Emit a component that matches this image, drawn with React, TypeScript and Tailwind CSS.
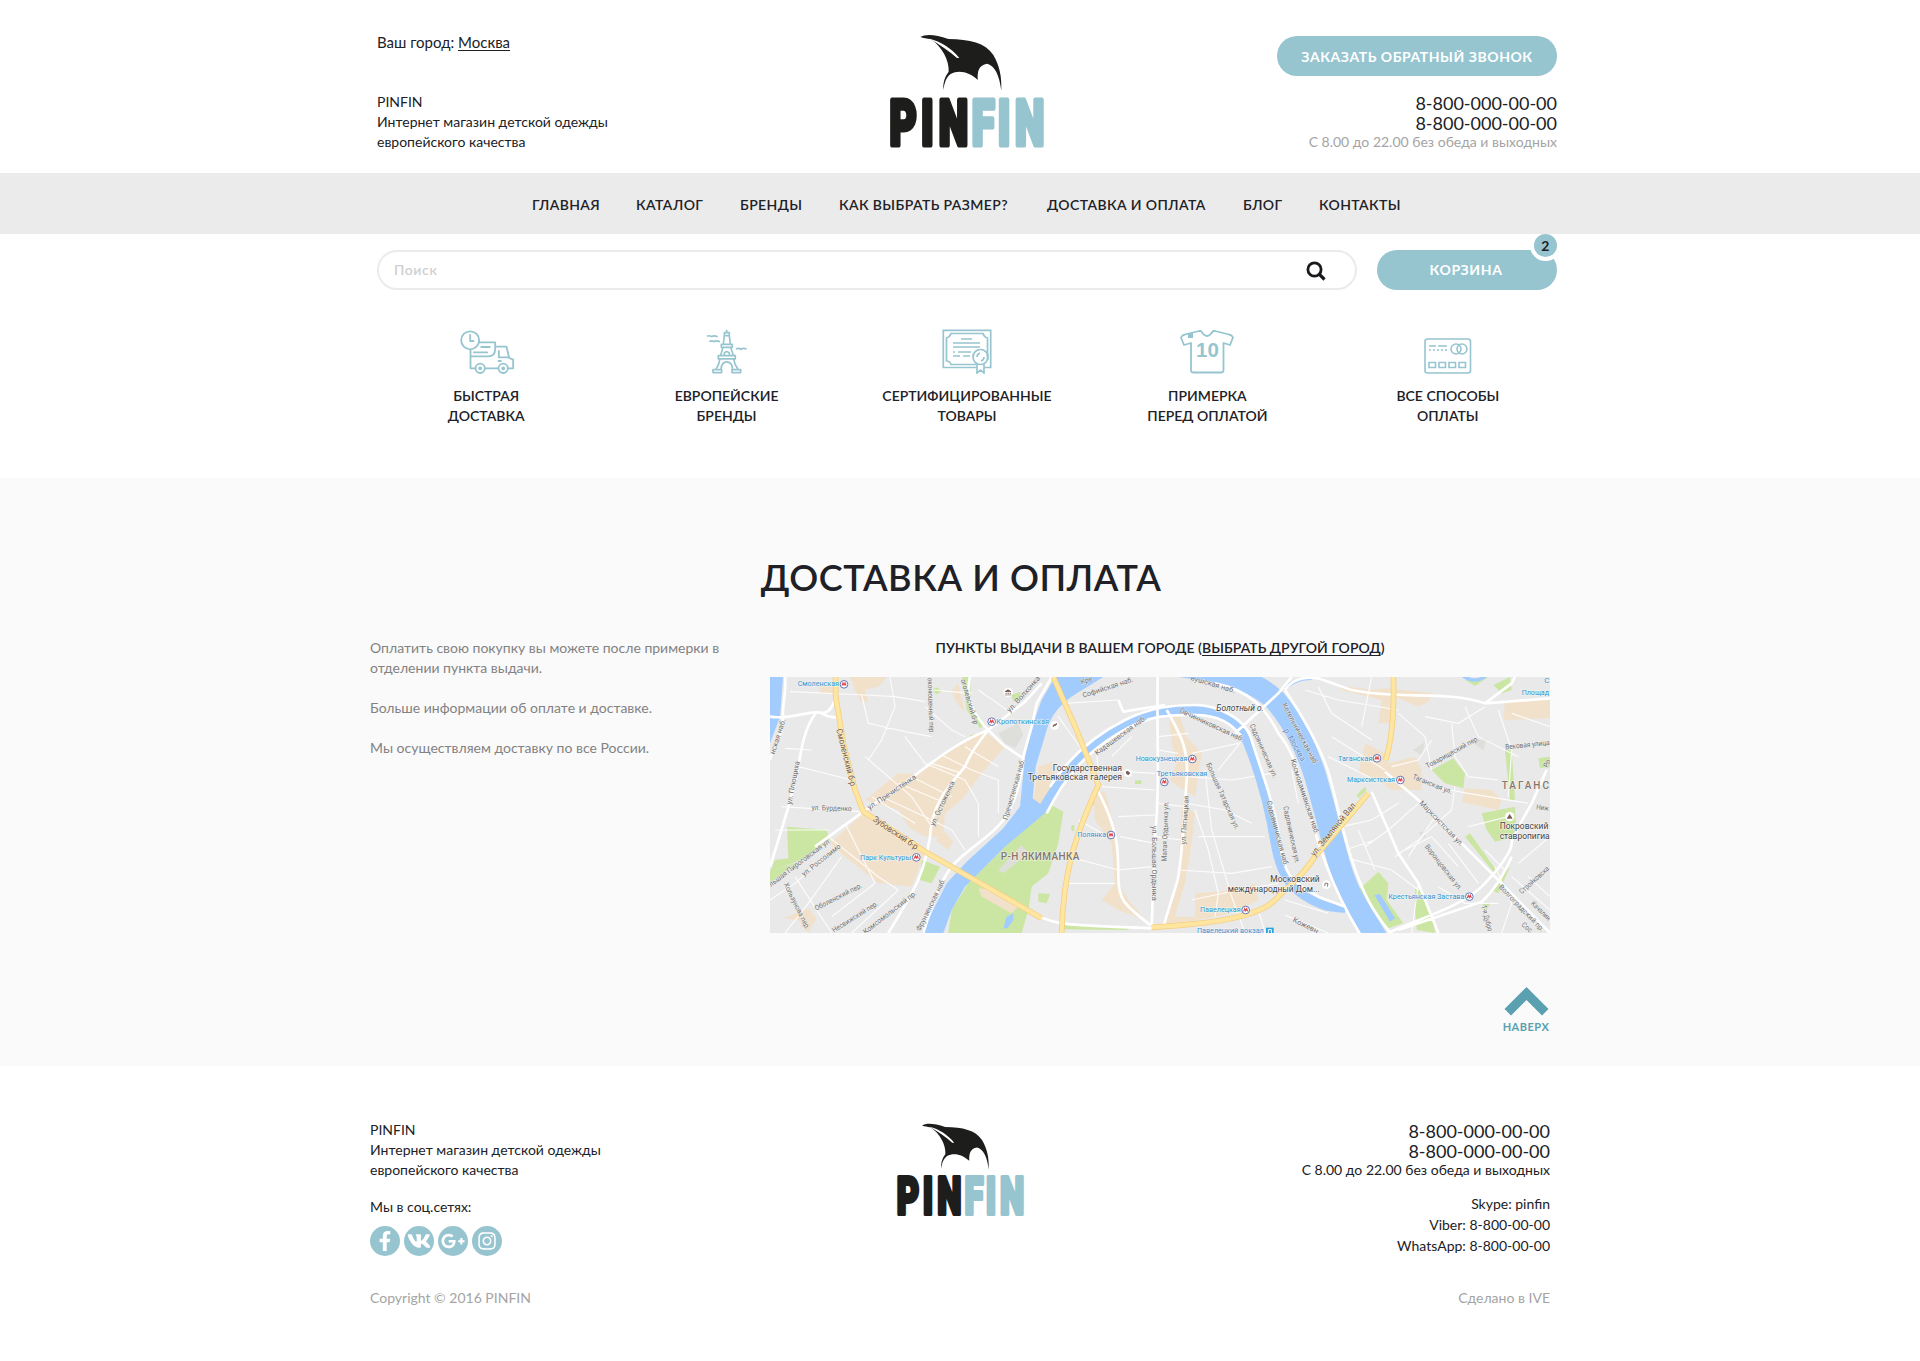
import type { ReactNode } from 'react';
import { FaFacebookF, FaGooglePlusG, FaInstagram, FaVk } from 'react-icons/fa';

const NAV = [
  { label: 'ГЛАВНАЯ', cls: 'w-[104px]' },
  { label: 'КАТАЛОГ', cls: 'w-[104px]' },
  { label: 'БРЕНДЫ', cls: 'w-[99px]' },
  { label: 'КАК ВЫБРАТЬ РАЗМЕР?', cls: 'w-[208px]' },
  { label: 'ДОСТАВКА И ОПЛАТА', cls: 'w-[196px]' },
  { label: 'БЛОГ', cls: 'w-[76px]' },
  { label: 'КОНТАКТЫ', cls: 'w-[90px]' },
];

function Logo({ className }: { className: string }) {
  return (
    <svg viewBox="60 42 462 339" className={className} aria-label="PINFIN" overflow="visible">
      <path
        fill="#1d1d1b"
        d="M151 51C165 42 195 42 235 57C300 58 345 68 370 105C390 140 395 170 394 212C388 165 375 138 352 131C325 135 322 155 323 180C300 158 268 148 242 162C228 172 223 190 220 210C219 190 223 172 236 155C238 120 215 80 183 58C170 55 160 55 151 51Z"
      />
      <path fill="#fff" d="M178 56C212 64 245 85 268 114L261 114C240 95 212 75 178 56Z" />
      <g transform="translate(0 374) scale(0.66 1)">
        <text fontFamily="Roboto" fontWeight="900" fontSize="190" strokeWidth="15" strokeLinejoin="round">
          <tspan x="89 232 313" fill="#1d1d1b" stroke="#1d1d1b">PIN</tspan>
          <tspan x="463 581 659" fill="#96c5d0" stroke="#96c5d0">FIN</tspan>
        </text>
      </g>
    </svg>
  );
}

function TruckIcon() {
  return (
    <svg viewBox="121 61 164 132" className="ml-[2px] h-[44px] w-[55px]" fill="none" stroke="#96c5d0" strokeWidth="5.500" strokeLinejoin="round" strokeLinecap="round">
      <circle cx="151" cy="92" r="27" />
      <path d="M151 76V94H161M179 98H226V118Q226 140 205 140H152M184 112H210M162 128H202M152 122V176H166M196 176H234M265 176H280V150L268 145L260 111H230M237 124V143H266M236 154H243" />
      <circle cx="181" cy="176" r="14" />
      <circle cx="250" cy="176" r="14" />
      <circle cx="181" cy="176" r="3" />
      <circle cx="250" cy="176" r="3" />
    </svg>
  );
}

function TowerIcon() {
  return (
    <svg viewBox="859 59 124 134" className="ml-px h-[44.6px] w-[41.3px]" fill="none" stroke="#96c5d0" strokeWidth="5" strokeLinejoin="round">
      <path d="M921 61V70M914 70H929V79H914ZM914 79L911 104M929 79L932 104M905 105H938V114H905ZM910 114L903 138M933 114L941 138M896 139H947V149H896ZM914 138V131Q921 123 929 131V138M901 149Q898 168 889 180M942 149Q945 168 955 180M880 181H906V190H880ZM937 181H963V190H937ZM904 180Q906 158 921 158Q937 158 939 180M862 81Q869 77 875 82Q883 77 894 82M869 97Q876 92 883 97Q890 92 901 97M949 119Q957 115 964 120Q970 115 981 119" />
    </svg>
  );
}

function CertificateIcon() {
  return (
    <svg viewBox="0 0 50 45" className="h-[45px] w-[50px]" fill="none" stroke="#96c5d0" strokeWidth="1.7">
      <path d="M35 38.5H1.3V1.3H48.7V38.5H42M34 35.5H9Q8 32 4.500 32V9Q8 8 9 4.500H41Q42 8 45.500 9V31M19 10H30M11 14H38M11 18H38M11 23H13M16 23H29M11 27H18M21 27H28M35 34V44L38.500 41L42 44V34" />
      <circle cx="38.500" cy="28" r="7.500" />
      <path d="M35 28Q35 25 38 24M42 28Q42 31 39 32" />
    </svg>
  );
}

function ShirtIcon() {
  return (
    <svg viewBox="0 0 54 45" className="h-[45px] w-[54px]" fill="none" stroke="#96c5d0" strokeWidth="1.8" strokeLinejoin="round">
      <path d="M19 2L5 5.500Q2 6 1 8.500L4 16L11 14V41Q11 43.500 13.500 43.500H41Q43.500 43.500 43.500 41V14L50 16L53 8.500Q52 6 49 5.500L35 2H33Q27 12 21 2Z" />
      <path d="M8 4.500L13 3.500V9H8Z" fill="#96c5d0" stroke="none" />
      <text x="27.500" y="28.300" textAnchor="middle" fontFamily="Liberation Sans" fontWeight="700" fontSize="20.500" fill="#96c5d0" stroke="none">10</text>
    </svg>
  );
}

function CardIcon() {
  return (
    <svg viewBox="0 0 48 36" className="h-[36px] w-[48px]" fill="none" stroke="#96c5d0" strokeWidth="1.600">
      <rect x="1" y="1" width="45.500" height="34" rx="2.500" />
      <path d="M5 8H12M14 8H23M5 12H7M9 12H11M13 12H15M17 12H19M21 12H23" />
      <circle cx="32" cy="11" r="5" />
      <circle cx="38" cy="11" r="5" />
      <path d="M5 24.500H11.500V29.500H5ZM15 24.500H21.500V29.500H15ZM25 24.500H31.500V29.500H25ZM35 24.500H41.500V29.500H35Z" />
    </svg>
  );
}

const FEATURES: { icon: ReactNode; lines: [string, string] }[] = [
  { icon: <TruckIcon />, lines: ['БЫСТРАЯ', 'ДОСТАВКА'] },
  { icon: <TowerIcon />, lines: ['ЕВРОПЕЙСКИЕ', 'БРЕНДЫ'] },
  { icon: <CertificateIcon />, lines: ['СЕРТИФИЦИРОВАННЫЕ', 'ТОВАРЫ'] },
  { icon: <ShirtIcon />, lines: ['ПРИМЕРКА', 'ПЕРЕД ОПЛАТОЙ'] },
  { icon: <CardIcon />, lines: ['ВСЕ СПОСОБЫ', 'ОПЛАТЫ'] },
];

type Label = { t: string; x: number; y: number; r?: number; s?: number; c?: string; a?: 'start' | 'middle' | 'end'; l?: number };

const STREETS: Label[] = [
  { t: 'ул. Плющиха', x: 84, y: 338, r: -79, l: 132 },
  { t: 'нская наб.', x: 38, y: 200, r: -72, l: 110 },
  { t: 'Смоленский б-р', x: 244, y: 262, r: 76, s: 26, c: '#7a5a35', l: 176 },
  { t: 'ул. Бурденко', x: 200, y: 414, r: 2, l: 120 },
  { t: 'ул. Пречистенка', x: 380, y: 366, r: -34, l: 170 },
  { t: 'ул. Остоженка', x: 532, y: 400, r: -65, l: 146 },
  { t: 'Зубовский б-р', x: 392, y: 488, r: 34, s: 26, c: '#7a5a35', l: 158 },
  { t: 'льшая Пироговская ул.', x: 104, y: 577, r: -37, l: 226 },
  { t: 'ул. Россолимо', x: 168, y: 570, r: -38, l: 142 },
  { t: 'Оболенский пер.', x: 220, y: 680, r: -27, l: 156 },
  { t: 'Несвижский пер.', x: 270, y: 740, r: -32, l: 158 },
  { t: 'Комсомольский пр.', x: 374, y: 727, r: -38, l: 196 },
  { t: 'Хользунова пер.', x: 96, y: 708, r: 64, l: 152 },
  { t: 'Фрунзенская наб.', x: 497, y: 704, r: -64, l: 172 },
  { t: 'оконюшенный пер.', x: 498, y: 108, r: 88, l: 168 },
  { t: 'оголевский б-р', x: 614, y: 95, r: 74, l: 140 },
  { t: 'ул. Волхонка', x: 775, y: 72, r: -48, l: 138 },
  { t: 'Пречистенская наб.', x: 746, y: 358, r: -74, l: 188 },
  { t: 'Софийская наб.', x: 1028, y: 52, r: -18, l: 158 },
  { t: 'Кре', x: 964, y: 31, r: -18, l: 36 },
  { t: 'вушская наб.', x: 1344, y: 42, r: 17, l: 138 },
  { t: 'Кадашевская наб.', x: 1066, y: 196, r: -36, l: 184 },
  { t: 'Овчинниковская наб.', x: 1340, y: 164, r: 25, l: 210 },
  { t: 'Садовническая ул.', x: 1496, y: 242, r: 66, l: 174 },
  { t: 'Садовническая наб.', x: 1538, y: 490, r: 75, l: 202 },
  { t: 'Садовническая ул.', x: 1580, y: 494, r: 78, l: 174 },
  { t: 'Большая Татарская ул.', x: 1374, y: 378, r: 66, l: 216 },
  { t: 'ул. Пятницкая', x: 1259, y: 450, r: -86, l: 146 },
  { t: 'Малая Ордынка ул.', x: 1200, y: 484, r: -88, l: 180 },
  { t: 'ул. Большая Ордынка', x: 1168, y: 580, r: 90, l: 224 },
  { t: 'Котельническая наб.', x: 1606, y: 192, r: 62, l: 206 },
  { t: 'р. Москва', x: 1590, y: 224, r: 60, s: 25, c: '#5686c4', l: 108 },
  { t: 'Космодамианская наб.', x: 1620, y: 380, r: 72, l: 236 },
  { t: 'ул. Земляной Вал', x: 1704, y: 478, r: -51, s: 26, c: '#7a5a35', l: 198 },
  { t: 'Товарищеский пер.', x: 2062, y: 246, r: -29, l: 178 },
  { t: 'Вековая улица', x: 2287, y: 224, r: -6, l: 134 },
  { t: 'Таганская ул.', x: 2002, y: 342, r: 22, l: 126 },
  { t: 'Марксистская ул.', x: 2030, y: 460, r: 46, l: 180 },
  { t: 'Воронцовская ул.', x: 2036, y: 592, r: 52, l: 168 },
  { t: 'Волгоградский пр.', x: 2270, y: 714, r: 46, l: 186 },
  { t: 'Стройковска', x: 2307, y: 630, r: -42, l: 112 },
  { t: 'Качалин', x: 2328, y: 722, r: 44, l: 74 },
  { t: '1-я Дубро', x: 2166, y: 745, r: 75, l: 80 },
  { t: 'Сос', x: 2286, y: 772, r: 40, l: 34 },
  { t: 'Ниж', x: 2314, y: 410, r: 8, a: 'start', l: 38 },
  { t: 'Ро', x: 2346, y: 280, r: -66, l: 24 },
  { t: 'Кожевн', x: 1622, y: 766, r: 26, l: 82 },
];

const STATIONS: { t: string; tx: number; ty: number; a: 'start' | 'end' | 'middle'; mx: number; my: number; l: number }[] = [
  { t: 'Смоленская', tx: 222, ty: 49, a: 'end', mx: 237, my: 43, l: 124 },
  { t: 'Кропоткинская', tx: 694, ty: 163, a: 'start', mx: 680, my: 155, l: 158 },
  { t: 'Парк Культуры', tx: 438, ty: 569, a: 'end', mx: 454, my: 562, l: 153 },
  { t: 'Новокузнецкая', tx: 1267, ty: 273, a: 'end', mx: 1282, my: 267, l: 155 },
  { t: 'Третьяковская', tx: 1251, ty: 318, a: 'middle', mx: 1198, my: 336, l: 152 },
  { t: 'Полянка', tx: 1023, ty: 501, a: 'end', mx: 1038, my: 495, l: 86 },
  { t: 'Павелецкая', tx: 1427, ty: 727, a: 'end', mx: 1442, my: 720, l: 122 },
  { t: 'Таганская', tx: 1822, ty: 273, a: 'end', mx: 1836, my: 265, l: 103 },
  { t: 'Марксистская', tx: 1890, ty: 337, a: 'end', mx: 1906, my: 330, l: 144 },
  { t: 'Крестьянская Застава', tx: 2098, ty: 687, a: 'end', mx: 2113, my: 680, l: 228 },
];

const PLACES: Label[] = [
  { t: 'Государственная', x: 1071, y: 302, a: 'end', l: 208 },
  { t: 'Третьяковская галерея', x: 1071, y: 331, a: 'end', l: 283 },
  { t: 'Болотный о.', x: 1425, y: 122, l: 142 },
  { t: 'Московский', x: 1664, y: 636, a: 'end', l: 148 },
  { t: 'международный Дом...', x: 1664, y: 666, a: 'end', l: 276 },
  { t: 'Покровский', x: 2204, y: 478, a: 'start', l: 146 },
  { t: 'ставропигиа', x: 2204, y: 507, a: 'start', l: 150 },
];

const ROAD_MAJOR =
  'M15 140C80 150 130 120 165 128S210 85 215 80M60 21C66 60 50 110 54 150S20 240 15 270M152 130C120 170 110 230 100 290S50 480 15 590M165 128Q195 145 222 142M150 530L295 425L455 312C520 262 590 210 670 180L780 95L830 40M615 21C600 80 620 120 660 170L715 225L770 262M670 180Q620 240 600 290C540 360 500 410 495 500Q480 600 440 670T370 789M560 590Q520 640 475 789M560 590C600 540 680 500 715 450S770 330 775 258L800 170L815 100L860 21M855 350C920 250 1000 190 1080 150S1230 105 1290 105S1440 140 1460 210S1530 400 1545 520S1600 640 1660 680L1740 710M845 430C900 320 960 250 1060 190S1220 135 1290 135S1400 160 1430 200M1060 90L1075 125L1200 105M1178 21C1175 250 1185 350 1170 500L1160 770M1205 120C1250 200 1272 240 1265 330S1250 600 1235 640L1195 770M1000 365C1060 480 1060 540 1060 620S1090 710 1155 765M780 715C860 770 900 765 1170 775M1560 60Q1590 15 1660 25L1760 60C1900 90 2040 60 2160 100L2355 85M1410 190L1540 70L1580 21M1350 40C1450 60 1500 110 1540 190C1590 250 1600 310 1625 400S1660 520 1682 580S1740 720 1790 800M1560 60C1620 150 1660 220 1688 300C1710 370 1730 480 1762 575S1820 720 1885 800M1820 365L1900 550L1960 640L2020 789M1860 305L1960 390L2180 610L2355 789M1870 789C1950 750 2090 710 2150 650S2240 540 2240 520S2290 420 2300 400L2345 300M1900 780L2150 695Q2200 650 2240 560M2160 100L2240 40L2250 21';

const ROAD_MINOR =
  'M75 65L300 75L390 80L480 95M290 75L310 160L420 185L500 200M375 21L390 110L350 210L310 270M500 60L620 70M60 235L140 240M100 290L260 330M50 410L290 425M30 480L190 480M190 500L340 620L400 660M240 460L330 640M200 540L90 640L15 690M90 620L200 789M230 560L130 700L60 789M330 640L200 740M400 660L260 789M300 260L370 320L440 380L500 470M420 200L480 280L600 330M350 380L480 440L560 480M400 340L520 390M440 320L560 380M500 280L590 310M530 255L620 300L700 330M600 230L700 290M640 60L740 130M560 480L600 540M480 110L560 180L600 200M320 380L450 460M700 330L700 430M600 330L640 400L640 500M880 140L930 210L960 250M900 100L1060 90M990 200L1000 300M1000 300L1170 310M1040 260L1100 200M1010 350L1170 360M1060 440L1170 435M1065 500L1170 520M1060 600L1160 590M940 450L1030 500M910 560L1060 600M900 640L1050 640M1180 200L1270 190M1180 240L1240 250M1180 400L1260 410M1170 500L1250 510M1240 600L1400 610L1520 590M1265 400L1380 420L1460 460M1270 320L1400 330L1520 310M1280 250L1420 220M1300 500L1500 500M1290 420L1330 540L1360 670L1350 740M1320 300L1340 480L1400 680L1440 789M1440 200L1360 300M1580 300L1600 400M1280 690L1420 660L1540 640M1660 50L1700 130L1820 210M1620 60L1720 90L1900 120M1700 200L1860 300M1690 260L1830 330M1820 20L1790 170M1900 130L1980 200L2000 300M1980 140L2080 160L2160 110M2000 210L1960 270L1880 290M2060 160L2070 260L2110 320L2200 330M2100 110L2140 200L2260 260M2200 120L2240 240L2230 380M2240 130L2355 170M2000 350L2110 370L2290 400M2070 350L2060 420L1960 510L1890 560M1900 400L1820 450L1730 470M1960 400L1870 480L1800 530M2010 440L1930 560M1900 550L2000 500L2080 590M2110 470L2230 440M2050 520L2140 640M1740 540L1830 510M1730 560L1880 600L1960 660M1780 480L1830 600M1960 640L1940 789M2020 650L2100 700L2200 700M2160 540L2220 600M2190 590L2240 700L2210 789M2260 580L2355 500M2290 620L2355 680M2240 620L2355 720M1690 730L1560 690M1560 735L1690 789M1500 789L1480 720';

const ROAD_HIGHWAY =
  'M212 21V80L235 220L270 360L295 425L480 545L770 710L830 745M865 21L935 180L1000 345C930 500 895 600 890 789M1160 772C1350 760 1480 740 1530 690S1610 620 1650 560L1810 370M1885 21Q1890 180 1862 270';

function Metro({ x, y }: { x: number; y: number }) {
  return (
    <g>
      <circle cx={x} cy={y} r="11.500" fill="#fff" stroke="#6377b8" strokeWidth="3" />
      <path d={`M${x - 6} ${y + 4}L${x - 3} ${y - 4}L${x} ${y + 2}L${x + 3} ${y - 4}L${x + 6} ${y + 4}`} fill="none" stroke="#e0474c" strokeWidth="3.500" />
    </g>
  );
}

function CityMap() {
  return (
    <svg viewBox="15 21 2340 768" className="block h-[256px] w-[780px]" fontFamily="Roboto">
      <rect x="15" y="21" width="2340" height="768" fill="#e9e9e9" />
      <g fill="#cbe6a3">
        <path d="M66 470L185 480L195 510L130 560L30 600L15 640V605L30 570L70 565ZM15 605L100 575L15 640ZM550 789L560 720L610 640L720 530L850 400L895 425L880 520L850 610L800 650L790 720L770 789ZM470 570L525 590L500 640L465 630ZM592 21L615 21L618 100L660 165L645 175L605 120ZM615 195L650 190L640 220L615 210ZM500 60L515 52L530 64L515 73ZM740 75L765 65L770 85L745 95ZM985 375L1015 400L1000 420L980 400ZM820 670L855 672L845 700L820 695ZM1270 280L1300 280L1292 302L1270 298ZM920 466L928 464L928 485L918 480ZM1110 332L1130 330L1128 342L1110 342ZM890 765L1000 768L1090 770V780L890 778Z" />
        <path d="M2000 300L2065 265L2100 310L2095 355L2040 340ZM2150 430L2250 410L2255 500L2190 515L2165 480ZM1775 665L1840 605L1870 640L1865 690L1915 760L1870 775ZM2185 45L2235 21L2240 60L2210 70ZM2220 240L2240 240L2250 390L2235 390ZM2320 265L2355 260V290L2325 295ZM1775 375L1800 350L1805 360L1780 385ZM2100 500L2115 490L2200 610L2185 605ZM1950 655L1975 670L2000 730L1950 720ZM1950 720L2000 730L2010 789L1955 780ZM2150 700L2175 700L2165 720ZM2180 660L2225 600L2235 590L2200 670ZM2100 30L2170 21L2130 48Z" />
      </g>
      <g fill="#f2e1ca">
        <path d="M455 312L650 180L720 230L650 310L590 390L540 430L535 500L480 500L430 470L400 420L300 390L400 310ZM195 520L300 425L460 520L480 545L440 650L340 640L240 560ZM160 40L205 35V70L165 70ZM255 21L365 21L340 50L300 60L310 95L285 95ZM540 485L565 515L550 540L510 510ZM560 60L580 40L600 130L570 90ZM640 655L700 660L760 710L740 730L650 680ZM55 745L130 715L155 745L130 789L100 750Z" />
        <path d="M820 290L865 275L870 330L835 405L805 395ZM985 365L1020 365L1040 440L1060 550L1060 640L1090 690L1140 750L1060 720L1010 690L1050 640L1040 520L990 450ZM1210 130L1245 140L1265 200L1310 250L1290 380L1240 350L1215 330L1235 280L1220 220ZM1250 400L1290 430L1280 520L1260 640L1230 740L1290 740L1290 670L1430 660L1470 640L1480 690L1400 730L1250 760L1200 765L1240 620Z" />
        <path d="M1720 45L1820 60L1860 55L2005 70L1990 95L1960 110L1890 80L1890 160L1840 160L1850 90L1730 60ZM1800 220L1860 250L1870 280L1950 260L1970 300L1970 360L1880 360L1840 330L1780 310ZM2100 355L2180 360L2210 390L2200 420L2090 395ZM2220 90L2355 85V145L2215 150Z" />
      </g>
      <g fill="#dededa">
        <path d="M700 600L770 525L790 550L715 610ZM700 190L760 160L775 195L750 235L720 220ZM1945 240L1980 215L1970 255ZM2120 215L2165 205L2155 240ZM1960 490L1985 480L1980 505Z" />
      </g>
      <path fill="none" stroke="#fff" strokeWidth="3.500" opacity="0.85" d={ROAD_MINOR} />
      <g fill="#a2cbfe">
        <path d="M15 21H54L45 140L15 220ZM470 789L545 640L605 575L715 475L765 410L780 260L805 160L830 90L870 21H1015L960 55C900 90 865 120 845 180L812 290L803 385L830 405L845 425L720 530L600 650L560 720L535 789Z" />
        <path d="M725 740L745 730V750L728 775L715 775ZM1828 675L1845 672L1890 745L1875 755Z" />
      </g>
      <g fill="none" stroke="#a2cbfe">
        <path strokeWidth="26" d="M830 420C900 300 960 240 1040 185S1210 118 1290 120S1420 150 1448 220S1510 400 1530 520S1600 670 1640 690S1700 715 1740 715" />
        <path strokeWidth="66" d="M1180 -20C1360 0 1470 30 1530 90C1590 160 1620 230 1645 300C1668 370 1690 470 1722 580S1780 710 1850 830" />
        <path strokeWidth="10" d="M2090 15Q2130 45 2165 15M1560 55Q1590 25 1640 25" />
      </g>
      <path fill="none" stroke="#fff" strokeWidth="8" strokeLinejoin="round" d={ROAD_MAJOR} />
      <path fill="none" stroke="#f4cf83" strokeWidth="17" d={ROAD_HIGHWAY} />
      <path fill="none" stroke="#ffe6a0" strokeWidth="12" d={ROAD_HIGHWAY} />
      <g stroke="#f3f3f3" strokeWidth="2" paintOrder="stroke">
        {STREETS.map((l, i) => (
          <text
            key={i}
            fontSize={l.s ?? 22}
            fill={l.c ?? '#707070'}
            textAnchor={l.a ?? 'middle'}
            textLength={l.l}
            lengthAdjust="spacingAndGlyphs"
            dominantBaseline="central"
            transform={`translate(${l.x} ${l.y}) rotate(${l.r ?? 0})`}
          >
            {l.t}
          </text>
        ))}
      </g>
      <g fontSize="24" fill="#2f93cf" stroke="#f5f5f5" strokeWidth="3" paintOrder="stroke">
        {STATIONS.map((s) => (
          <text key={s.t} x={s.tx} y={s.ty} textAnchor={s.a} textLength={s.l} lengthAdjust="spacingAndGlyphs">
            {s.t}
          </text>
        ))}
        <text x="2270" y="75" textLength="82" lengthAdjust="spacingAndGlyphs">Площад</text>
        <text x="2338" y="38">С</text>
        <text x="1296" y="789" textLength="200" lengthAdjust="spacingAndGlyphs">Павелецкий вокзал</text>
      </g>
      {STATIONS.map((s) => (
        <Metro key={s.t} x={s.mx} y={s.my} />
      ))}
      <path d="M1503 773H1526V792H1503Z" fill="#26a3dc" />
      <path d="M1510 789V779H1519V789" fill="none" stroke="#fff" strokeWidth="3" />
      <g fill="#444" stroke="#f7f7f7" strokeWidth="3.500" paintOrder="stroke" fontSize="26">
        {PLACES.map((p) => (
          <text
            key={p.t}
            x={p.x}
            y={p.y}
            textAnchor={p.a ?? 'middle'}
            textLength={p.l}
            lengthAdjust="spacingAndGlyphs"
            fontStyle={p.t === 'Болотный о.' ? 'italic' : 'normal'}
          >
            {p.t}
          </text>
        ))}
      </g>
      <g fill="#85756a" stroke="#f5f5f0" strokeWidth="3" paintOrder="stroke" fontSize="30" fontWeight="500">
        <text x="707" y="571" textLength="236">Р-Н ЯКИМАНКА</text>
        <text x="2210" y="357" textLength="142">ТАГАНС</text>
      </g>
      <g>
        <circle cx="729" cy="67" r="14" fill="#fff" />
        <circle cx="869" cy="166" r="13" fill="#fff" />
        <circle cx="1089" cy="309" r="12" fill="#fff" />
        <circle cx="1684" cy="644" r="13" fill="#fff" />
        <circle cx="2234" cy="440" r="14" fill="#fff" />
        <g fill="#7b6058">
          <path d="M720 64L729 58L738 64V66H720ZM722 68H725V73H722ZM728 68H731V73H728ZM734 68H737V73H734ZM719 74H739V76H719ZM862 168L868 162L871 165L865 171ZM868 165L874 159L877 162L871 168ZM1082 305L1088 302L1096 309L1090 316L1084 312ZM2226 444L2234 432L2242 444V446H2226Z" />
        </g>
        <path d="M1679 648L1681 639L1689 641L1687 650" fill="none" stroke="#7b6058" strokeWidth="2.500" />
      </g>
    </svg>
  );
}

const SOCIAL: { name: string; icon: ReactNode }[] = [
  { name: 'Facebook', icon: <FaFacebookF size={20} /> },
  { name: 'VK', icon: <FaVk size={24} /> },
  { name: 'Google+', icon: <FaGooglePlusG size={24} /> },
  { name: 'Instagram', icon: <FaInstagram size={20} /> },
];

export default function App() {
  return (
    <div className="h-[1361px] w-[1920px] overflow-hidden bg-white font-['Lato',sans-serif] text-[14px] leading-5 text-[#202126]">
      <header className="ml-[377px] flex h-[173px] w-[1180px] justify-between">
        <div className="w-[513px] pt-[32px]">
          <p className="text-[15px]">
            Ваш город: <a className="underline underline-offset-2">Москва</a>
          </p>
          <p className="mt-[40px]">PINFIN</p>
          <p>Интернет магазин детской одежды</p>
          <p>европейского качества</p>
        </div>
        <Logo className="mt-[34px] h-[113px] w-[154px]" />
        <div className="flex w-[513px] flex-col items-end pt-[36px]">
          <button className="h-10 w-[280px] rounded-full bg-[#96c5d0] pt-[2px] text-[14px] font-bold tracking-[0.55px] text-white">ЗАКАЗАТЬ ОБРАТНЫЙ ЗВОНОК</button>
          <p className="mt-[17px] text-[18px]">8-800-000-00-00</p>
          <p className="text-[18px]">8-800-000-00-00</p>
          <p className="-mt-px text-[#a4a4a4]">С 8.00 до 22.00 без обеда и выходных</p>
        </div>
      </header>

      <nav className="relative z-10 flex h-[61px] items-center bg-[#ebebeb] pl-[532px] pt-[3px] text-[14px] font-semibold tracking-[0.4px]">
        {NAV.map((n) => (
          <a key={n.label} className={`${n.cls} whitespace-nowrap`}>
            {n.label}
          </a>
        ))}
      </nav>

      <div className="ml-[377px] mt-4 flex w-[1180px] gap-5">
        <div className="flex h-10 w-[980px] items-center justify-between rounded-full border-2 border-[#ebebeb] pl-[15px] pr-[29px]">
          <span className="font-semibold tracking-[0.6px] text-[#d0d0d0]">Поиск</span>
          <svg viewBox="0 0 20 20" className="mt-px h-5 w-5" fill="none" stroke="#1a1a1e" strokeWidth="2.800">
            <circle cx="8.500" cy="8.500" r="6.600" />
            <path d="M13.200 13.200L18.500 18.500" strokeWidth="3.200" />
          </svg>
        </div>
        <button className="relative h-10 w-[180px] rounded-full bg-[#96c5d0] pr-[2px] font-bold tracking-[0.6px] text-white">
          КОРЗИНА
          <span className="absolute -right-1 -top-5 flex h-[31px] w-[31px] items-center justify-center rounded-full border-4 border-white bg-[#96c5d0] text-[#202126]">2</span>
        </button>
      </div>

      <ul className="ml-[366px] mt-[38px] grid h-[150px] w-[1202px] grid-cols-5 text-center font-semibold">
        {FEATURES.map((f) => (
          <li key={f.lines[0]} className="flex flex-col items-center">
            <div className="mb-[12px] flex h-[46px] items-end">{f.icon}</div>
            <span>{f.lines[0]}</span>
            <span>{f.lines[1]}</span>
          </li>
        ))}
      </ul>

      <main className="h-[588px] bg-[#fafafa] pt-[75px]">
        <h1 className="pl-[2px] text-center text-[36px] font-semibold leading-[48px] tracking-[0.6px]">ДОСТАВКА И ОПЛАТА</h1>
        <div className="mx-auto mt-[37px] flex w-[1180px] justify-between">
          <div className="w-[380px] whitespace-nowrap text-[#828282]">
            <p>
              Оплатить свою покупку вы можете после примерки в<br />
              отделении пункта выдачи.
            </p>
            <p className="mt-5">Больше информации об оплате и доставке.</p>
            <p className="mt-5">Мы осуществляем доставку по все России.</p>
          </div>
          <div className="w-[780px]">
            <h2 className="mb-[19px] text-center font-semibold tracking-[0.05px]">
              ПУНКТЫ ВЫДАЧИ В ВАШЕМ ГОРОДЕ (<a className="underline underline-offset-2">ВЫБРАТЬ ДРУГОЙ ГОРОД</a>)
            </h2>
            <CityMap />
          </div>
        </div>
        <div className="mx-auto mt-[54px] flex w-[1180px] justify-end">
          <a className="flex w-[48px] flex-col items-center text-[11px] font-bold leading-4 tracking-[0.5px] text-[#5ba0b0]">
            <svg viewBox="0 0 45 30" className="h-[30px] w-[45px]">
              <path d="M22.500 0L44.500 22L38 28.500L22.500 13L7 28.500L0.500 22Z" fill="#5ba0b0" />
            </svg>
            <span className="mt-[2px]">НАВЕРХ</span>
          </a>
        </div>
      </main>

      <footer className="mx-auto flex w-[1180px] justify-between pt-[54px]">
        <div className="w-[527px]">
          <p>PINFIN</p>
          <p>Интернет магазин детской одежды</p>
          <p>европейского качества</p>
          <p className="mt-[17px]">Мы в соц.сетях:</p>
          <div className="mt-[9px] flex gap-1">
            {SOCIAL.map((s) => (
              <a key={s.name} aria-label={s.name} className="flex h-[30px] w-[30px] items-center justify-center rounded-full bg-[#96c5d0] text-white">
                {s.icon}
              </a>
            ))}
          </div>
          <p className="mt-8 text-[#a4a4a4]">Copyright © 2016 PINFIN</p>
        </div>
        <Logo className="mt-[3px] h-[93px] w-[127px]" />
        <div className="w-[526px] text-right">
          <p className="mt-px text-[18px]">8-800-000-00-00</p>
          <p className="text-[18px]">8-800-000-00-00</p>
          <p className="-mt-px">С 8.00 до 22.00 без обеда и выходных</p>
          <div className="mt-[13px] leading-[21px]">
            <p>Skype: pinfin</p>
            <p>Viber: 8-800-00-00</p>
            <p>WhatsApp: 8-800-00-00</p>
          </div>
          <p className="mt-[32px] text-[#a4a4a4]">Сделано в IVE</p>
        </div>
      </footer>
    </div>
  );
}
